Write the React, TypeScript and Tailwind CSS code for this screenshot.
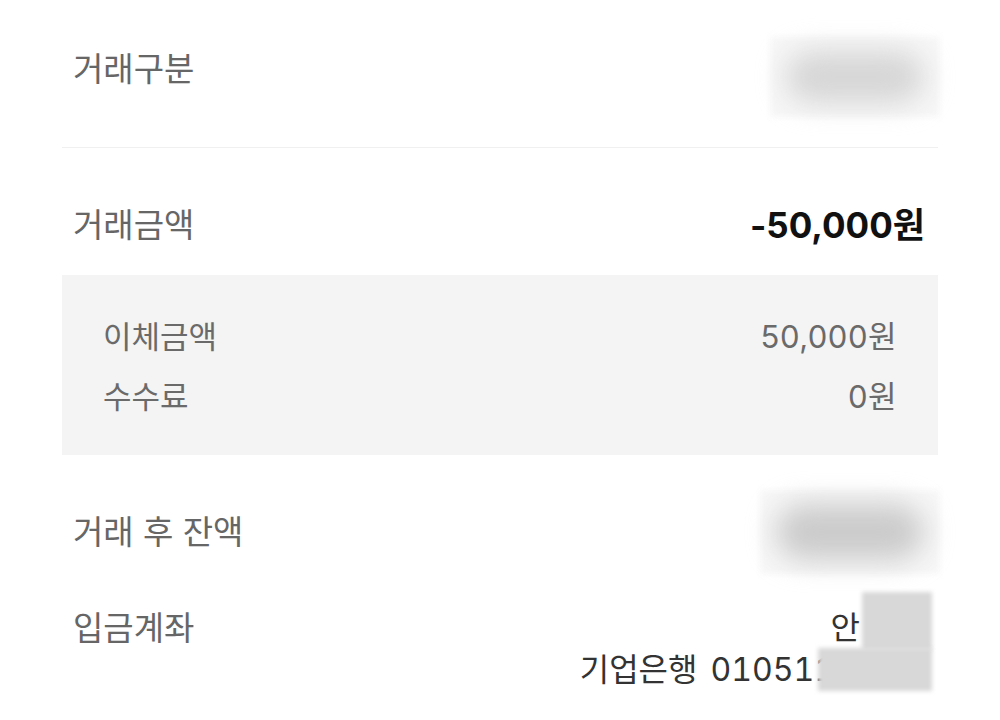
const FONT = "font-['Inter','Noto_Sans_CJK_KR',sans-serif]";

function Blob({ className, tone }: { className: string; tone: string }) {
  return (
    <div className={`relative ${className}`}>
      <div className="absolute inset-0 bg-[#f7f7f7] blur-[3px]" />
      <div className={`absolute inset-x-[16px] inset-y-[14px] rounded-[40px] blur-[14px] ${tone}`} />
    </div>
  );
}

export default function App() {
  return (
    <div className={`min-h-[720px] w-[1000px] bg-white px-[62px] ${FONT}`}>
      <div className="flex justify-between pt-[37px] pb-[30px]">
        <span className="mt-[12px] pl-[11px] text-[33px] leading-[40px] text-[#666]">거래구분</span>
        <Blob className="mr-[-2px] h-[80px] w-[170px]" tone="bg-[#d6d6d6]" />
      </div>
      <div className="h-px bg-[#f0f0f0]" />

      <div className="flex items-center justify-between pt-[57px] pb-[30px]">
        <span className="pl-[11px] text-[33px] leading-[40px] text-[#666]">거래금액</span>
        <span className="pr-[13px] text-[35px] font-bold leading-[40px] text-[#111]">-50,000원</span>
      </div>

      <div className="flex flex-col gap-[20px] bg-[#f4f4f4] px-[41px] pt-[42px] pb-[38px]">
        <div className="flex items-center justify-between text-[31px] leading-[40px] text-[#6a6a6a]">
          <span>이체금액</span>
          <span className="tracking-[0.5px]">50,000원</span>
        </div>
        <div className="flex items-center justify-between text-[31px] leading-[40px] text-[#6a6a6a]">
          <span>수수료</span>
          <span className="tracking-[0.5px]">0원</span>
        </div>
      </div>

      <div className="flex items-center justify-between pt-[35px]">
        <span className="pl-[11px] text-[33px] leading-[40px] text-[#666]">거래 후 잔액</span>
        <Blob className="mr-[-2px] h-[84px] w-[180px]" tone="bg-[#cbcbcb]" />
      </div>

      <div className="flex justify-between pt-[34px]">
        <span className="pl-[11px] text-[33px] leading-[40px] text-[#666]">입금계좌</span>
        <div className="flex flex-col items-end pr-[6px] text-[32px] leading-[40px] text-[#333]">
          <div className="flex h-[40px] items-start">
            <span>안</span>
            <span className="-mt-[16px] ml-[2px] h-[58px] w-[70px] bg-[#d8d8d8] blur-[2px]" />
          </div>
          <div className="flex items-center">
            <span>기업은행</span>
            <span className="ml-[13px] tabular-nums">010511</span>
            <span className="-ml-[17px] h-[43px] w-[114px] bg-[#d8d8d8] blur-[2px]" />
          </div>
        </div>
      </div>
    </div>
  );
}
